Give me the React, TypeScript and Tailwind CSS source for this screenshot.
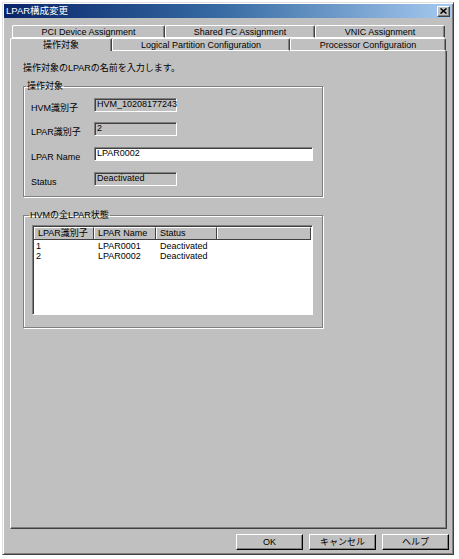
import React from "react";

const font = "font-['Liberation_Sans','Noto_Sans_CJK_JP',sans-serif]";

const raised =
  "border-t border-l border-t-white border-l-white border-r border-b border-r-[#404040] border-b-[#404040] shadow-[inset_-1px_-1px_0_#808080]";
const sunken =
  "border-t border-l border-t-[#808080] border-l-[#808080] border-r border-b border-r-white border-b-white shadow-[inset_1px_1px_0_#404040]";

function Tab({ label, w, selected }: { label: string; w: string; selected?: boolean }) {
  return (
    <div
      className={`${w} h-full flex items-center justify-center border-t border-l border-t-white border-l-white border-r border-r-[#404040] shadow-[inset_-1px_0_0_#808080] rounded-t-[2px] ${
        selected ? "bg-[#c0c0c0]" : "bg-[#c0c0c0] border-b border-b-white"
      }`}
    >
      <span className="text-[9px] leading-[10px] text-black">{label}</span>
    </div>
  );
}

function Field({ value, w, white }: { value: string; w: string; white?: boolean }) {
  return (
    <div className={`${w} h-[14px] ${sunken} ${white ? "bg-white" : "bg-[#c0c0c0]"} pl-[2px]`}>
      <span className="block text-[9px] leading-[11px] text-black">{value}</span>
    </div>
  );
}

function Row({ label, children, mt }: { label: string; children: React.ReactNode; mt: string }) {
  return (
    <div className={`flex ${mt}`}>
      <div className="w-[70px] pl-[7px] pt-[4px] text-[9px] leading-[12px] text-black">{label}</div>
      {children}
    </div>
  );
}

const rows = [
  { id: "1", name: "LPAR0001", status: "Deactivated" },
  { id: "2", name: "LPAR0002", status: "Deactivated" },
];

export default function App() {
  return (
    <div className={`w-[459px] h-[559px] bg-white pt-[2px] pl-[2px] ${font}`}>
      <div className="w-[452px] h-[553px] flex flex-col bg-[#c0c0c0] border-l border-t border-l-[#e0e0e0] border-t-[#e0e0e0] border-r border-b border-r-[#404040] border-b-[#404040] shadow-[inset_1px_1px_0_#fff,inset_-1px_-1px_0_#808080]">
        {/* Title bar */}
        <div className="mx-[1px] mt-[1px] h-[14px] flex items-center justify-between bg-gradient-to-r from-[#0a246a] via-[#3a6ea5] to-[#a6caf0] pl-[2px] pr-[2px]">
          <span className="text-[9.5px] leading-[12px] text-white">LPAR構成変更</span>
          <div className={`w-[13px] h-[11px] bg-[#c0c0c0] ${raised} flex items-center justify-center`}>
            <svg width="7" height="6" viewBox="0 0 7 6">
              <path d="M0.5 0.5 L6.5 5.5 M6.5 0.5 L0.5 5.5" stroke="#000" strokeWidth="1.6" />
            </svg>
          </div>
        </div>

        {/* Tabs + panel */}
        <div className="pl-[7px] pt-[7px]">
          <div className="flex h-[13px] pl-[2px]">
            <Tab label="PCI Device Assignment" w="w-[153px]" />
            <Tab label="Shared FC Assignment" w="w-[150px]" />
            <Tab label="VNIC Assignment" w="w-[130px]" />
          </div>
          <div className="flex h-[13px]">
            <Tab label="操作対象" w="w-[102px]" selected />
            <Tab label="Logical Partition Configuration" w="w-[178px]" />
            <Tab label="Processor Configuration" w="w-[156px]" />
          </div>

          <div className="w-[437px] h-[478px] border-l border-l-white border-r border-b border-r-[#404040] border-b-[#404040] shadow-[inset_-1px_-1px_0_#808080] pl-[12px] pt-[11px]">
            <div className="text-[9px] leading-[12px] text-black">操作対象のLPARの名前を入力します。</div>

            <fieldset className="m-0 mt-[6px] p-0 w-[300px] h-[117px] border border-[#808080] shadow-[inset_1px_1px_0_#fff,1px_1px_0_#fff]">
              <legend className="ml-[2px] px-[1px] text-[9px] leading-[12px] text-black">操作対象</legend>
              <Row label="HVM識別子" mt="mt-[6px]">
                <Field value="HVM_10208177243" w="w-[83px]" />
              </Row>
              <Row label="LPAR識別子" mt="mt-[8px]">
                <Field value="2" w="w-[83px]" />
              </Row>
              <Row label="LPAR Name" mt="mt-[9px]">
                <Field value="LPAR0002" w="w-[219px]" white />
              </Row>
              <Row label="Status" mt="mt-[9px]">
                <Field value="Deactivated" w="w-[83px]" />
              </Row>
            </fieldset>

            <fieldset className="m-0 mt-[12px] p-0 w-[300px] h-[119px] border border-[#808080] shadow-[inset_1px_1px_0_#fff,1px_1px_0_#fff]">
              <legend className="ml-[5px] px-[1px] text-[9px] leading-[12px] text-black">HVMの全LPAR状態</legend>
              <div className={`ml-[8px] mt-[4px] w-[281px] h-[90px] bg-white ${sunken} p-[1px]`}>
                <div className="flex h-[13px] border-b border-b-[#404040]">
                  {[
                    ["LPAR識別子", "w-[60px]"],
                    ["LPAR Name", "w-[62px]"],
                    ["Status", "w-[61px]"],
                    ["", "flex-1"],
                  ].map(([t, w], i) => (
                    <div
                      key={i}
                      className={`${w} h-full bg-[#c0c0c0] border-t border-l border-t-white border-l-white border-r border-r-[#404040] pl-[3px] text-[9px] leading-[11px] text-black`}
                    >
                      {t}
                    </div>
                  ))}
                </div>
                <div className="pt-[1px]">
                  {rows.map((r) => (
                    <div key={r.id} className="flex h-[10px] text-[9px] leading-[10px] text-black">
                      <div className="w-[60px] pl-[2px]">{r.id}</div>
                      <div className="w-[62px] pl-[4px]">{r.name}</div>
                      <div className="w-[61px] pl-[4px]">{r.status}</div>
                    </div>
                  ))}
                </div>
              </div>
            </fieldset>
          </div>
        </div>

        {/* Buttons */}
        <div className="flex justify-end gap-[6px] pr-[4px] pt-[5px]">
          {["OK", "キャンセル", "ヘルプ"].map((b) => (
            <button
              key={b}
              className={`w-[67px] h-[16px] bg-[#c0c0c0] ${raised} border-r-black border-b-black text-[9px] leading-[12px] text-black`}
            >
              {b}
            </button>
          ))}
        </div>
      </div>
    </div>
  );
}
